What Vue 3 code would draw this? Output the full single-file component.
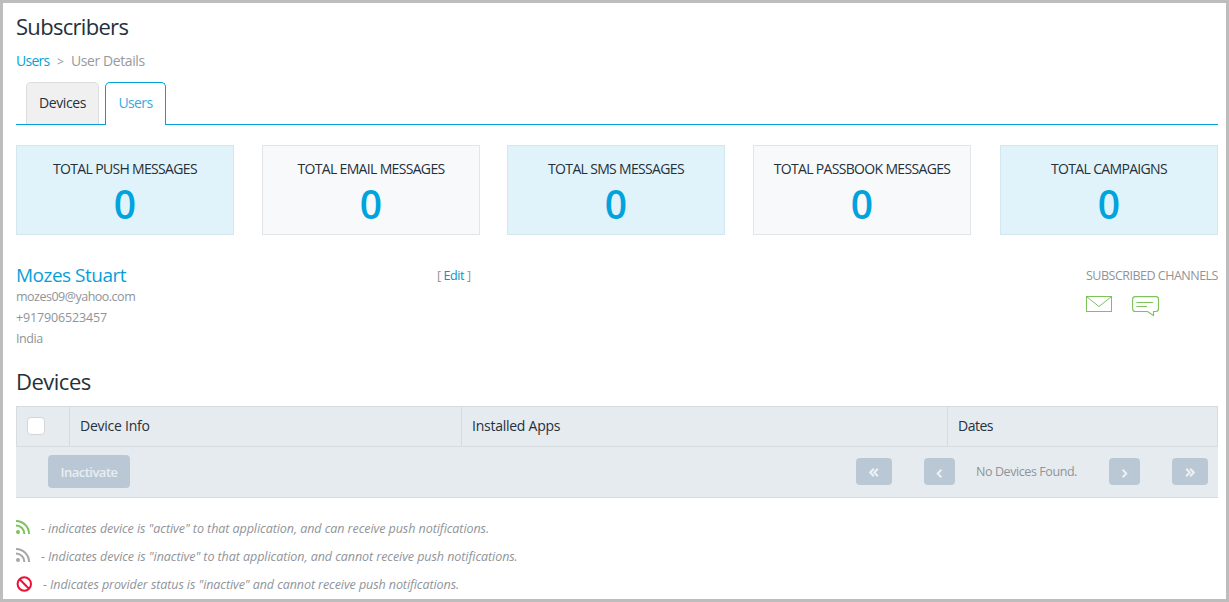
<script setup>
const stats = [
  { label: 'TOTAL PUSH MESSAGES', value: 0 },
  { label: 'TOTAL EMAIL MESSAGES', value: 0 },
  { label: 'TOTAL SMS MESSAGES', value: 0 },
  { label: 'TOTAL PASSBOOK MESSAGES', value: 0 },
  { label: 'TOTAL CAMPAIGNS', value: 0 },
]
</script>

<template>
  <div class="page">
    <h1 class="title">Subscribers</h1>
    <nav class="crumbs">
      <a class="crumb-link">Users</a><span class="crumb-sep">&gt;</span><span class="crumb-here">User Details</span>
    </nav>
    <div class="tabs">
      <div class="tab">Devices</div>
      <div class="tab active">Users</div>
    </div>

    <section class="stats">
      <div v-for="(s, i) in stats" :key="s.label" class="card" :class="{ tinted: i % 2 === 0 }">
        <div class="label">{{ s.label }}</div>
        <div class="value">{{ s.value }}</div>
      </div>
    </section>

    <section class="profile">
      <div class="person">
        <div class="name">Mozes Stuart</div>
        <div class="email">mozes09@yahoo.com</div>
        <div class="phone">+917906523457</div>
        <div class="country">India</div>
      </div>
      <div class="edit">[ <a>Edit</a> ]</div>
      <div class="channels">
        <div class="channels-title">SUBSCRIBED CHANNELS</div>
        <div class="channel-icons">
          <svg width="26" height="17" viewBox="0 0 26 17" fill="none" stroke="#7cc35a">
            <rect x=".5" y=".5" width="25" height="15" />
            <path d="M1 1l12 9.5L25 1" />
          </svg>
          <svg width="28" height="21" viewBox="0 0 28 21" fill="none" stroke="#7cc35a" stroke-width="1.15">
            <path d="M3.2.6H24Q26.5.6 26.5 3.2V12.5Q26.5 15.5 24 15.5H21.5V19.5L15.5 15.5H3.2Q.6 15.5 .6 12.5V3.2Q.6.6 3.2.6Z" />
            <path d="M4.5 6.5H21M4.5 10.5H15" />
          </svg>
        </div>
      </div>
    </section>

    <h2 class="subtitle">Devices</h2>
    <section class="table">
      <div class="head">
        <div class="cell check"><span class="box"></span></div>
        <div class="cell info">Device Info</div>
        <div class="cell apps">Installed Apps</div>
        <div class="cell dates">Dates</div>
      </div>
      <div class="foot">
        <button class="inactivate">Inactivate</button>
        <div class="pager">
          <button class="pg wide"><svg width="10" height="9" viewBox="0 0 10 9"><path d="M4.8.8L1.2 4.5l3.6 3.7M8.8.8L5.2 4.5l3.6 3.7" /></svg></button>
          <button class="pg prev"><svg class="low" width="7" height="9" viewBox="0 0 7 9"><path d="M5.3.8L1.7 4.5l3.6 3.7" /></svg></button>
          <span class="none">No Devices Found.</span>
          <button class="pg next"><svg class="low" width="7" height="9" viewBox="0 0 7 9"><path d="M1.7.8l3.6 3.7-3.6 3.7" /></svg></button>
          <button class="pg wide"><svg width="10" height="9" viewBox="0 0 10 9"><path d="M1.2.8l3.6 3.7-3.6 3.7M5.2.8l3.6 3.7-3.6 3.7" /></svg></button>
        </div>
      </div>
    </section>

    <section class="legend">
      <div class="row">
        <svg class="rss on" width="14" height="14" viewBox="0 0 14 14"><circle cx="2" cy="12" r="2" /><path d="M0 5.6A8.4 8.4 0 0 1 8.4 14M0 1A13 13 0 0 1 13 14" /></svg>
        <span>- indicates device is "active" to that application, and can receive push notifications.</span>
      </div>
      <div class="row">
        <svg class="rss off" width="14" height="14" viewBox="0 0 14 14"><circle cx="2" cy="12" r="2" /><path d="M0 5.6A8.4 8.4 0 0 1 8.4 14M0 1A13 13 0 0 1 13 14" /></svg>
        <span>- Indicates device is "inactive" to that application, and cannot receive push notifications.</span>
      </div>
      <div class="row blocked">
        <svg width="16" height="16" viewBox="0 0 16 16" fill="none" stroke="#ed1135" stroke-width="2"><circle cx="8.3" cy="8" r="6.7" /><path d="M3.6 3.3l9.4 9.4" /></svg>
        <span>- Indicates provider status is "inactive" and cannot receive push notifications.</span>
      </div>
    </section>
  </div>
</template>

<style>
body { margin: 0; background: #fff; }
</style>

<style scoped>
.page {
  box-sizing: border-box; width: 1229px; height: 602px; overflow: hidden;
  border: 3px solid #bdbdbd; padding: 8px 8px 0 13px;
  font-family: "Open Sans", "Noto Sans", sans-serif; color: #8f9499; background: #fff;
}
.title, .subtitle { margin: 0; font-weight: 400; font-size: 22px; line-height: 31px; color: #25303b; letter-spacing: -.7px; }
.subtitle { letter-spacing: -.5px; }
.crumbs { display: flex; margin-top: 8px; font-size: 14px; line-height: 21px; letter-spacing: -.4px; color: #999; }
.crumb-link { color: #069fd9; letter-spacing: -.75px; }
.crumb-sep { width: 21.5px; font-size: 12px; padding-top: 1px; text-align: center; }
.tabs { display: flex; gap: 6px; margin-top: 10px; padding-left: 10px; height: 42px; border-bottom: 1px solid #00a0d8; }
.tab {
  box-sizing: border-box; width: 73px; height: 42px; border: 1px solid #ddd; border-bottom: 0;
  border-radius: 5px 5px 0 0; background: #f0f0f0; color: #25303b; text-align: center;
  font-size: 14px; line-height: 40px; letter-spacing: -.4px;
}
.tab.active { width: 61px; height: 43px; background: #fff; border-color: #00a0d8; color: #35abe0; letter-spacing: -.6px; }

.stats { display: grid; grid-template-columns: 246px 245px 246px 247px 218px; margin-top: 20px; }
.card { box-sizing: border-box; width: 218px; height: 90px; border: 1px solid #e3e6e8; background: #f8f9fb; text-align: center; padding-top: 13px; }
.card.tinted { background: #e1f3fa; border-color: #d3e7ef; }
.label { font-size: 14px; font-weight: 500; line-height: 20px; letter-spacing: -.67px; color: #25303b; white-space: nowrap; }
.value { font-size: 39px; font-weight: 600; line-height: 50px; color: #00a3de; }

.profile { display: flex; margin-top: 29px; height: 102px; font-size: 12.5px; line-height: 21px; letter-spacing: -.4px; }
.person { width: 421px; }
.name { font-size: 19px; line-height: 22px; letter-spacing: -.5px; color: #069fd9; }
.email { letter-spacing: -.5px; }
.phone { letter-spacing: -.15px; }
.edit { width: 649px; line-height: 24px; }
.edit a { color: #0693cc; }
.channels-title { line-height: 24px; letter-spacing: -.5px; white-space: nowrap; }
.channel-icons { display: flex; gap: 20px; margin-top: 8px; }

.table { margin-top: 9px; background: #e6ebef; }
.head { display: flex; box-sizing: border-box; height: 41px; border: 1px solid #d6dbdf; }
.cell { box-sizing: border-box; padding-left: 10px; border-left: 1px solid #d6dbdf; font-size: 14px; font-weight: 500; line-height: 38px; letter-spacing: -.25px; color: #25303b; }
.check { width: 52px; border: 0; padding-top: 10px; }
.box { display: block; box-sizing: border-box; width: 18px; height: 18px; border: 1px solid #d3d6d9; border-radius: 4px; background: #fff; }
.info { width: 392px; }
.apps { width: 486px; }
.dates { flex: 1; letter-spacing: -.5px; }
.foot { box-sizing: border-box; display: flex; justify-content: space-between; align-items: center; height: 51px; padding: 0 10px 1px 32px; border-bottom: 1px solid #d6dbdf; }
button { border: 0; padding: 0; border-radius: 4px; background: #bac8d6; color: #e9eef2; font-family: inherit; }
.inactivate { width: 82px; height: 33px; font-size: 13px; font-weight: 600; letter-spacing: -.5px; }
.pager { display: flex; align-items: center; font-size: 12.5px; }
.pg { display: flex; align-items: center; justify-content: center; width: 31px; height: 27px; }
.pg.wide { width: 36px; }
.pg svg { fill: none; stroke: #edf1f5; stroke-width: 2; margin-top: 2px; }
.pg .low { margin-top: 4px; }
.prev { margin-left: 32px; }
.none { width: 133px; margin-left: 21px; letter-spacing: -.42px; }
.next { margin-right: 32px; }

.legend { margin-top: 16px; font-size: 12.5px; font-style: italic; letter-spacing: -.06px; }
.row { display: flex; align-items: center; height: 28px; gap: 11px; }
.blocked { letter-spacing: -.08px; }
.rss { margin-top: -3px; }
.rss path { fill: none; stroke-width: 2; }
.on { fill: #7cc35a; stroke: #7cc35a; }
.off { fill: #a7a7a7; stroke: #a7a7a7; }
.rss circle { stroke: none; }
</style>
